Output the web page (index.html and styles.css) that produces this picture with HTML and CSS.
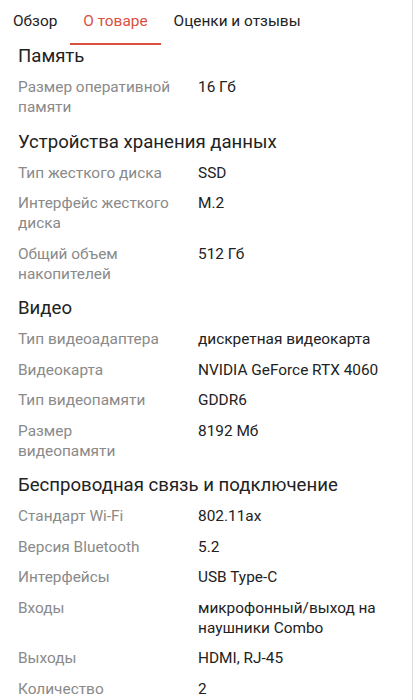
FILE: index.html
```html
<!DOCTYPE html>
<html lang="ru">
<head>
<meta charset="utf-8">
<link rel="stylesheet" href="styles.css">
</head>
<body>
<div class="page">
  <nav class="tabs">
    <div class="tab">Обзор</div>
    <div class="tab active">О товаре</div>
    <div class="tab">Оценки и отзывы</div>
  </nav>
  <main class="specs">
    <section class="group first">
      <h2 class="group-title">Память</h2>
      <div class="row"><div class="label">Размер оперативной<br>памяти</div><div class="value">16 Гб</div></div>
    </section>
    <section class="group">
      <h2 class="group-title">Устройства хранения данных</h2>
      <div class="row"><div class="label">Тип жесткого диска</div><div class="value">SSD</div></div>
      <div class="row"><div class="label">Интерфейс жесткого<br>диска</div><div class="value">M.2</div></div>
      <div class="row"><div class="label">Общий объем<br>накопителей</div><div class="value">512 Гб</div></div>
    </section>
    <section class="group">
      <h2 class="group-title">Видео</h2>
      <div class="row"><div class="label">Тип видеоадаптера</div><div class="value">дискретная видеокарта</div></div>
      <div class="row"><div class="label">Видеокарта</div><div class="value">NVIDIA GeForce RTX 4060</div></div>
      <div class="row"><div class="label">Тип видеопамяти</div><div class="value">GDDR6</div></div>
      <div class="row"><div class="label">Размер<br>видеопамяти</div><div class="value">8192 Мб</div></div>
    </section>
    <section class="group">
      <h2 class="group-title">Беспроводная связь и подключение</h2>
      <div class="row"><div class="label">Стандарт Wi-Fi</div><div class="value">802.11ax</div></div>
      <div class="row"><div class="label">Версия Bluetooth</div><div class="value">5.2</div></div>
      <div class="row"><div class="label">Интерфейсы</div><div class="value">USB Type-C</div></div>
      <div class="row"><div class="label">Входы</div><div class="value">микрофонный/выход на<br>наушники Combo</div></div>
      <div class="row"><div class="label">Выходы</div><div class="value">HDMI, RJ-45</div></div>
      <div class="row"><div class="label">Количество</div><div class="value">2</div></div>
    </section>
  </main>
</div>
</body>
</html>
```

FILE: styles.css
```css
html, body {
  margin: 0;
  padding: 0;
  background: #ffffff;
}
body {
  font-family: Roboto, "Noto Sans", "Liberation Sans", sans-serif;
  color: #222222;
  -webkit-font-smoothing: antialiased;
}
.page {
  width: 412px;
  min-height: 700px;
  border-right: 1px solid #dcdcdc;
  overflow: hidden;
}
.tabs {
  display: flex;
  height: 45px;
}
.tab {
  padding: 0 13px 2px;
  display: flex;
  align-items: center;
  font-size: 15.4px;
  color: #222222;
  border-bottom: 2.5px solid transparent;
  box-sizing: border-box;
}
.tab.active {
  color: #d9503f;
  border-bottom-color: #d9503f;
}
.specs {
  padding: 0 18px;
}
.group-title {
  margin: 8.5px 0 4.8px;
  font-size: 18.6px;
  font-weight: 400;
  line-height: 22px;
  color: #222222;
}
.group.first .group-title {
  margin-top: 0;
}
.row {
  display: grid;
  grid-template-columns: 180px 1fr;
  padding: 5.23px 0;
  font-size: 15.4px;
  line-height: 20px;
}
.label {
  color: #8a8a8a;
}
.value {
  color: #222222;
}
```
